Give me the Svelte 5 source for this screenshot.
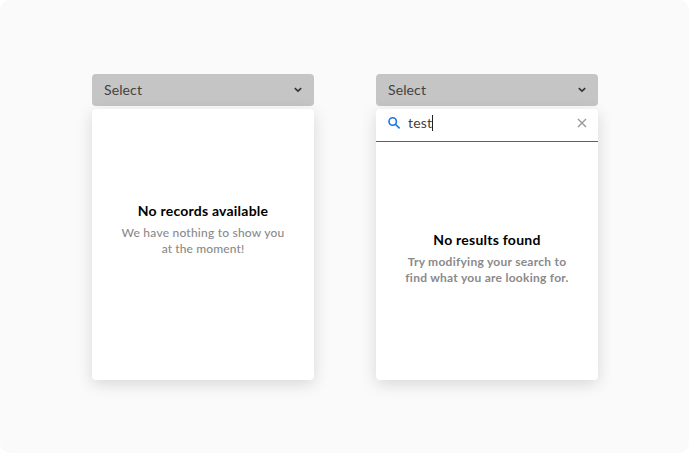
<script>
  const menus = [
    {
      search: null,
      title: { text: 'No records available', spacing: 0.22 },
      lines: [
        { text: 'We have nothing to show you', spacing: 0.22 },
        { text: 'at the moment!', spacing: 0.12 },
      ],
    },
    {
      search: 'test',
      title: { text: 'No results found', spacing: 0.24 },
      lines: [
        { text: 'Try modifying your search to', spacing: 0.26 },
        { text: 'find what you are looking for.', spacing: 0.26 },
      ],
    },
  ];
</script>

<main>
  {#each menus as menu}
    <section class="dropdown">
      <button class="field" type="button">
        <span>Select</span>
        <svg width="8" height="6" viewBox="0 0 8 6"><path d="M.8 1.2 4 4.2 7.2 1.2" /></svg>
      </button>
      <div class="panel">
        {#if menu.search}
          <div class="search">
            <svg class="glass" width="13" height="13" viewBox="0 0 13 13">
              <circle cx="4.7" cy="4.5" r="3.7" />
              <path d="M7.4 7.2 11.6 11.4" />
            </svg>
            <span class="query">{menu.search}</span>
            <i class="caret"></i>
            <svg class="clear" width="10" height="10" viewBox="0 0 10 10"><path d="M1 1 9 9M9 1 1 9" /></svg>
          </div>
        {/if}
        <div class="empty" class:strong={menu.search}>
          <h2><span style="letter-spacing: {menu.title.spacing}px">{menu.title.text}</span></h2>
          {#each menu.lines as line}
            <p><span style="letter-spacing: {line.spacing}px">{line.text}</span></p>
          {/each}
        </div>
      </div>
    </section>
  {/each}
</main>

<style>
  :global(body) {
    background: #fff;
  }
  main {
    box-sizing: border-box;
    width: 689px;
    height: 453px;
    padding: 74px 91px 0 92px;
    display: flex;
    justify-content: flex-start;
    gap: 62px;
    background: #fafafa;
    border-radius: 10px;
    font-family: Lato, "Open Sans", sans-serif;
  }
  .dropdown {
    width: 222px;
  }
  .field {
    box-sizing: border-box;
    display: flex;
    align-items: center;
    justify-content: space-between;
    width: 100%;
    height: 32px;
    padding: 0 12px;
    border: 0;
    border-radius: 4px;
    background: #c5c5c5;
    color: #424242;
    font: 14px/20px Lato, sans-serif;
    letter-spacing: 0.12px;
  }
  svg {
    display: block;
    fill: none;
  }
  .field svg {
    stroke: #333;
    stroke-width: 1.6;
  }
  .panel {
    box-sizing: border-box;
    display: flex;
    flex-direction: column;
    height: 271px;
    margin-top: 3px;
    border-radius: 4px;
    background: #fff;
    box-shadow: 0 4px 16px rgba(0, 0, 0, 0.14);
  }
  .search {
    box-sizing: border-box;
    display: flex;
    align-items: center;
    height: 33px;
    padding: 0 11px 4px 12px;
    border-bottom: 1px solid #1273cf;
    color: #424242;
    font-size: 14px;
    line-height: 20px;
  }
  .glass {
    stroke: #1677e0;
    stroke-width: 1.6;
  }
  .query {
    margin-left: 7px;
    letter-spacing: 0.15px;
  }
  .caret {
    width: 1px;
    height: 16px;
    background: #222;
  }
  .clear {
    margin-left: auto;
    stroke: #999;
    stroke-width: 1.4;
  }
  .empty {
    flex: 1;
    padding-top: 92px;
    text-align: center;
  }
  .search + .empty {
    padding-top: 88px;
  }
  h2 {
    margin: 0 0 5px;
    color: #000;
    font-size: 14px;
    line-height: 19px;
    font-weight: 700;
  }
  p {
    margin: 0;
    color: #8a8a8a;
    font-size: 12px;
    line-height: 16px;
    font-weight: 500;
    white-space: nowrap;
  }
  .strong p {
    font-weight: 700;
  }
</style>
